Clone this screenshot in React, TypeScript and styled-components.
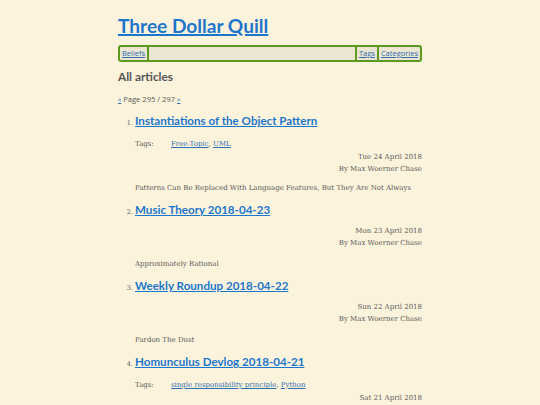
import React from "react";
import styled, { createGlobalStyle } from "styled-components";

const Global = createGlobalStyle`
  html, body { margin: 0; padding: 0; background: #fcf3dc; }
  body { font-family: "DejaVu Serif", serif; color: #555; }
  a { color: #1f78cc; }
`;

const Page = styled.div`
  width: 304px;
  margin: 0 auto;
  padding: 14px 0 0 0;
`;

const SiteTitle = styled.h1`
  margin: 0;
  font-family: Lato, sans-serif;
  font-size: 19.1px;
  font-weight: 700;
  line-height: 24px;
  a {
    color: #1c76cc;
    text-decoration-thickness: 1.5px;
  }
`;

const Nav = styled.nav`
  display: flex;
  align-items: stretch;
  margin-top: 7px;
  height: 13px;
  border: 2px solid #5c9a1f;
  border-radius: 3px;
  background: #ece5d2;
  font-family: "Open Sans", sans-serif;
  font-size: 7.5px;
  line-height: 13px;
`;

const NavItem = styled.a<{ $sep?: "left" | "right" }>`
  padding: 0 2px;
  color: #2d6fb0;
  ${(p) => (p.$sep === "right" ? "border-right: 2px solid #5c9a1f;" : "")}
  ${(p) => (p.$sep === "left" ? "border-left: 2px solid #5c9a1f;" : "")}
`;

const NavFill = styled.div`
  flex: 1;
`;

const SectionTitle = styled.h2`
  margin: 7px 0 0 0;
  font-family: Lato, sans-serif;
  font-size: 11.8px;
  font-weight: 700;
  color: #555;
  line-height: 16px;
`;

const Pager = styled.div`
  margin-top: 9px;
  font-family: "Open Sans", sans-serif;
  font-size: 7.6px;
  line-height: 10px;
  color: #5a5a5a;
  a { color: #2d6fb0; font-size: 6.5px; }
`;

const List = styled.ol`
  margin: 7px 0 0 0;
  padding: 0 0 0 17px;
`;

const Item = styled.li`
  margin-bottom: 8px;
  font-family: "DejaVu Serif", serif;
  font-size: 6.5px;
  color: #555;
`;

const ItemTitle = styled.h3`
  margin: 0;
  display: inline;
  font-family: Lato, sans-serif;
  font-size: 11.6px;
  font-weight: 700;
  line-height: 18px;
  a {
    color: #1c76cc;
    text-decoration-thickness: 1.2px;
  }
`;

const TagRow = styled.div`
  display: flex;
  margin-top: 9px;
  font-family: "DejaVu Serif", serif;
  font-size: 7px;
  line-height: 10px;
  color: #5a5a5a;
  a { color: #2d6fb0; }
`;

const TagLabel = styled.span`
  width: 36px;
`;

const Meta = styled.div<{ $gap: number }>`
  margin-top: ${(p) => p.$gap}px;
  text-align: right;
  font-family: "DejaVu Serif", serif;
  font-size: 7px;
  line-height: 12px;
  color: #5a5a5a;
`;

const Summary = styled.p<{ $gap: number }>`
  margin: ${(p) => p.$gap}px 0 0 0;
  font-family: "DejaVu Serif", serif;
  font-size: 7px;
  line-height: 10px;
  color: #5a5a5a;
`;

type Article = {
  title: string;
  tags?: string[];
  date: string;
  summary: string;
};

const articles: Article[] = [
  {
    title: "Instantiations of the Object Pattern",
    tags: ["Free-Topic", "UML"],
    date: "Tue 24 April 2018",
    summary: "Patterns Can Be Replaced With Language Features, But They Are Not Always",
  },
  { title: "Music Theory 2018-04-23", date: "Mon 23 April 2018", summary: "Approximately Rational" },
  { title: "Weekly Roundup 2018-04-22", date: "Sun 22 April 2018", summary: "Pardon The Dust" },
  {
    title: "Homunculus Devlog 2018-04-21",
    tags: ["single responsibility principle", "Python"],
    date: "Sat 21 April 2018",
    summary: "",
  },
];

export default function App() {
  return (
    <>
      <Global />
      <Page>
        <SiteTitle>
          <a href="#">Three Dollar Quill</a>
        </SiteTitle>
        <Nav>
          <NavItem href="#" $sep="right">Beliefs</NavItem>
          <NavFill />
          <NavItem href="#" $sep="left">Tags</NavItem>
          <NavItem href="#" $sep="left">Categories</NavItem>
        </Nav>
        <SectionTitle>All articles</SectionTitle>
        <Pager>
          <a href="#">«</a> Page 295 / 297 <a href="#">»</a>
        </Pager>
        <List>
          {articles.map((a) => (
            <Item key={a.title}>
              <ItemTitle>
                <a href="#">{a.title}</a>
              </ItemTitle>
              {a.tags && (
                <TagRow>
                  <TagLabel>Tags:</TagLabel>
                  <span>
                    {a.tags.map((t, i) => (
                      <React.Fragment key={t}>
                        <a href="#">{t}</a>
                        {i < a.tags!.length - 1 ? ", " : ""}
                      </React.Fragment>
                    ))}
                  </span>
                </TagRow>
              )}
              <Meta $gap={a.tags ? 2 : 6}>{a.date}</Meta>
              <Meta $gap={0}>By Max Woerner Chase</Meta>
              {a.summary && <Summary $gap={a.tags ? 8 : 10}>{a.summary}</Summary>}
            </Item>
          ))}
        </List>
      </Page>
    </>
  );
}
